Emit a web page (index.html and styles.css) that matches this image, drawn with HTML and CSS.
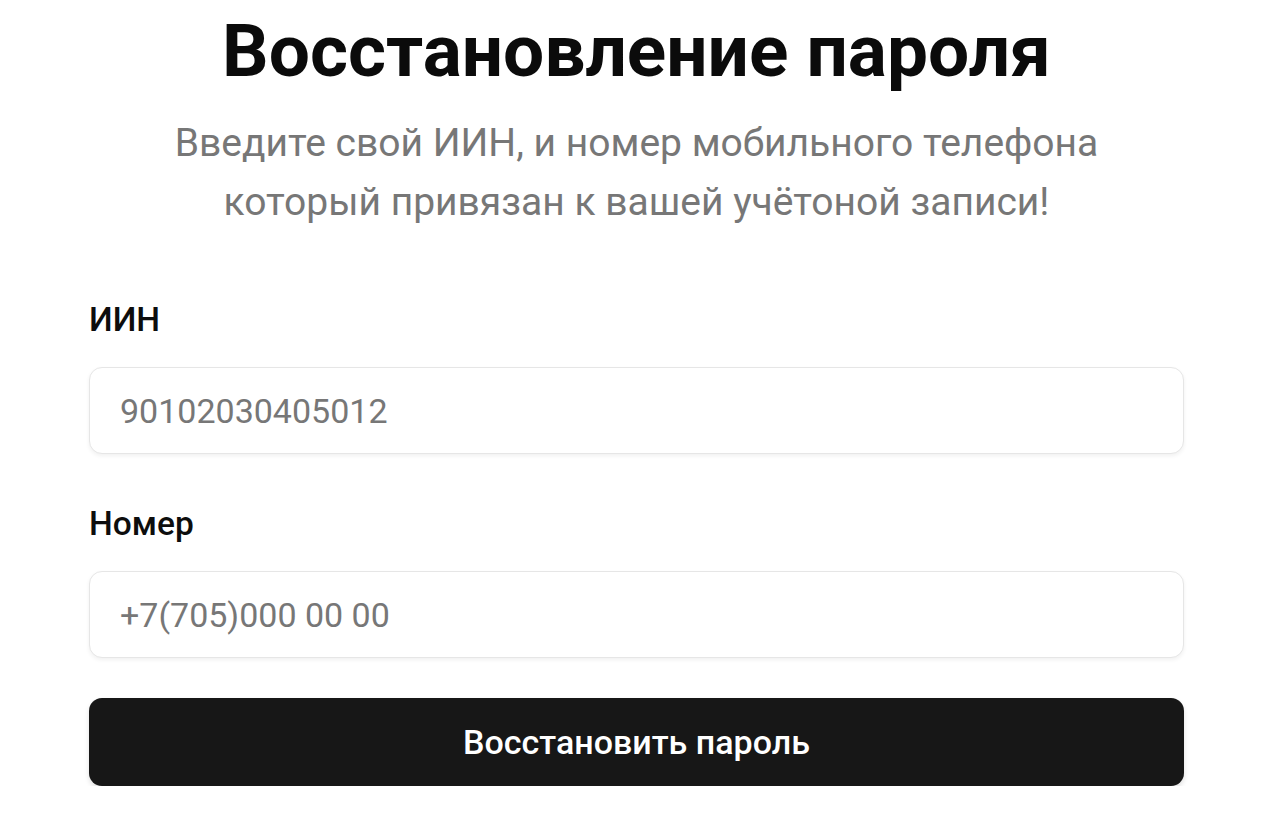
FILE: index.html
```html
<!DOCTYPE html>
<html lang="ru">
<head>
<meta charset="utf-8">
<title>Восстановление пароля</title>
<link rel="stylesheet" href="styles.css">
</head>
<body>
<main class="page">
  <h1 class="title">Восстановление пароля</h1>
  <p class="subtitle">Введите свой ИИН, и номер мобильного телефона<br>который привязан к вашей учётоной записи!</p>
  <form class="form">
    <label class="label" for="iin">ИИН</label>
    <input class="input" id="iin" type="text" placeholder="90102030405012">
    <label class="label label-second" for="phone">Номер</label>
    <input class="input" id="phone" type="text" placeholder="+7(705)000 00 00">
    <button class="button" type="button">Восстановить пароль</button>
  </form>
</main>
</body>
</html>
```

FILE: styles.css
```css
* { box-sizing: border-box; }
html, body {
  margin: 0;
  padding: 0;
  background: #ffffff;
  font-family: Roboto, "Noto Sans", sans-serif;
}
.page {
  padding: 0 96px 0 89px;
  display: flex;
  flex-direction: column;
}
.title {
  margin: 7px 0 0;
  font-size: 73px;
  font-weight: 700;
  line-height: 88px;
  text-align: center;
  color: #0b0b0b;
}
.subtitle {
  margin: 19px 0 0;
  font-size: 39px;
  line-height: 59px;
  font-weight: 400;
  text-align: center;
  color: #777777;
}
.form {
  display: flex;
  flex-direction: column;
  margin-top: 68px;
}
.label {
  font-size: 33.5px;
  font-weight: 500;
  line-height: 40px;
  color: #0d0d0d;
}
.label-second {
  margin-top: 50px;
}
.input {
  margin-top: 27px;
  height: 87px;
  border: 1.5px solid #e6e6e6;
  border-radius: 13px;
  padding: 0 30px;
  font-family: inherit;
  font-size: 34px;
  color: #111;
  background: #fff;
  box-shadow: 0 2px 4px rgba(0,0,0,0.06);
  outline: none;
}
.input::placeholder {
  color: #777777;
}
.button {
  margin-top: 40px;
  height: 88px;
  border: none;
  border-radius: 13px;
  background: #171717;
  color: #ffffff;
  font-family: inherit;
  font-size: 34px;
  font-weight: 500;
  box-shadow: 0 3px 5px rgba(0,0,0,0.12);
  cursor: pointer;
}
```
